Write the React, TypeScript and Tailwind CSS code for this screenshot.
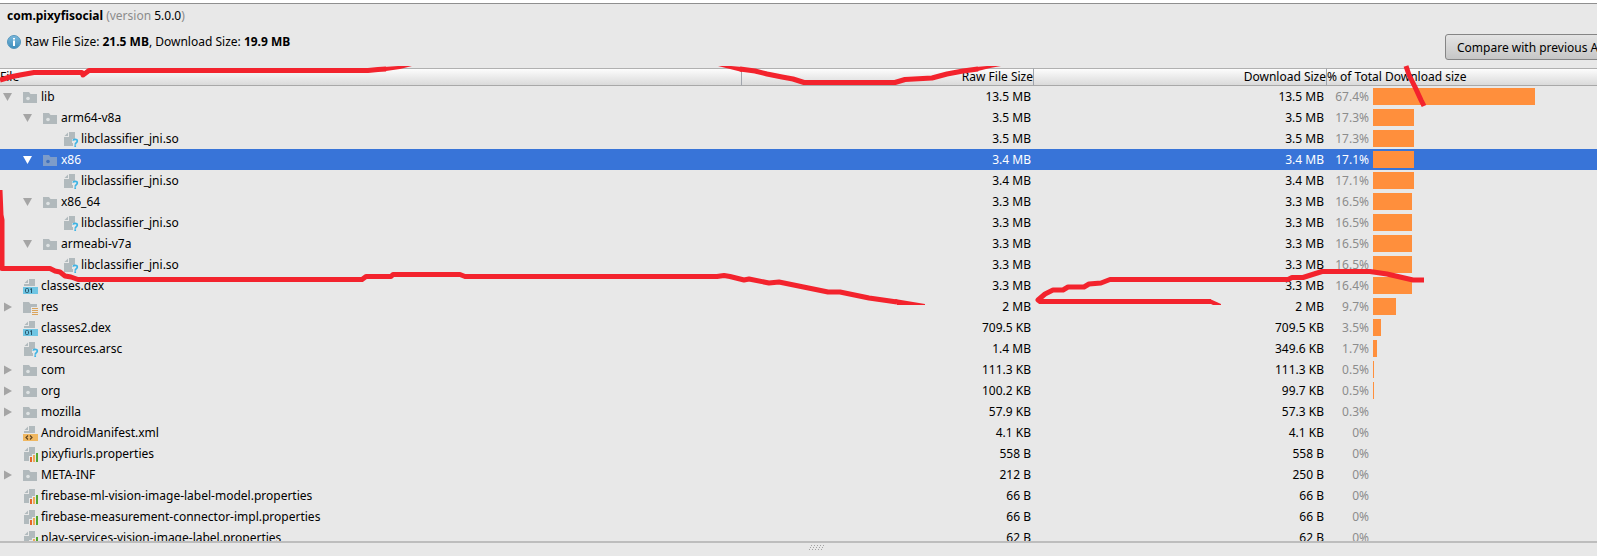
import clsx from 'clsx'

type IconKind = 'folder' | 'res' | 'unknown' | 'dex' | 'xml' | 'props'

type Entry = {
  name: string
  icon: IconKind
  depth: number
  open?: boolean
  raw: string
  download: string
  percent: string
  bar: number
  selected?: boolean
}

const entries: Entry[] = [
  { name: 'lib', icon: 'folder', depth: 0, open: true, raw: '13.5 MB', download: '13.5 MB', percent: '67.4%', bar: 162 },
  { name: 'arm64-v8a', icon: 'folder', depth: 1, open: true, raw: '3.5 MB', download: '3.5 MB', percent: '17.3%', bar: 41 },
  { name: 'libclassifier_jni.so', icon: 'unknown', depth: 2, raw: '3.5 MB', download: '3.5 MB', percent: '17.3%', bar: 41 },
  { name: 'x86', icon: 'folder', depth: 1, open: true, raw: '3.4 MB', download: '3.4 MB', percent: '17.1%', bar: 41, selected: true },
  { name: 'libclassifier_jni.so', icon: 'unknown', depth: 2, raw: '3.4 MB', download: '3.4 MB', percent: '17.1%', bar: 41 },
  { name: 'x86_64', icon: 'folder', depth: 1, open: true, raw: '3.3 MB', download: '3.3 MB', percent: '16.5%', bar: 39 },
  { name: 'libclassifier_jni.so', icon: 'unknown', depth: 2, raw: '3.3 MB', download: '3.3 MB', percent: '16.5%', bar: 39 },
  { name: 'armeabi-v7a', icon: 'folder', depth: 1, open: true, raw: '3.3 MB', download: '3.3 MB', percent: '16.5%', bar: 39 },
  { name: 'libclassifier_jni.so', icon: 'unknown', depth: 2, raw: '3.3 MB', download: '3.3 MB', percent: '16.5%', bar: 39 },
  { name: 'classes.dex', icon: 'dex', depth: 0, raw: '3.3 MB', download: '3.3 MB', percent: '16.4%', bar: 39 },
  { name: 'res', icon: 'res', depth: 0, open: false, raw: '2 MB', download: '2 MB', percent: '9.7%', bar: 23 },
  { name: 'classes2.dex', icon: 'dex', depth: 0, raw: '709.5 KB', download: '709.5 KB', percent: '3.5%', bar: 8 },
  { name: 'resources.arsc', icon: 'unknown', depth: 0, raw: '1.4 MB', download: '349.6 KB', percent: '1.7%', bar: 4 },
  { name: 'com', icon: 'folder', depth: 0, open: false, raw: '111.3 KB', download: '111.3 KB', percent: '0.5%', bar: 1 },
  { name: 'org', icon: 'folder', depth: 0, open: false, raw: '100.2 KB', download: '99.7 KB', percent: '0.5%', bar: 1 },
  { name: 'mozilla', icon: 'folder', depth: 0, open: false, raw: '57.9 KB', download: '57.3 KB', percent: '0.3%', bar: 0 },
  { name: 'AndroidManifest.xml', icon: 'xml', depth: 0, raw: '4.1 KB', download: '4.1 KB', percent: '0%', bar: 0 },
  { name: 'pixyfiurls.properties', icon: 'props', depth: 0, raw: '558 B', download: '558 B', percent: '0%', bar: 0 },
  { name: 'META-INF', icon: 'folder', depth: 0, open: false, raw: '212 B', download: '250 B', percent: '0%', bar: 0 },
  { name: 'firebase-ml-vision-image-label-model.properties', icon: 'props', depth: 0, raw: '66 B', download: '66 B', percent: '0%', bar: 0 },
  { name: 'firebase-measurement-connector-impl.properties', icon: 'props', depth: 0, raw: '66 B', download: '66 B', percent: '0%', bar: 0 },
  { name: 'play-services-vision-image-label.properties', icon: 'props', depth: 0, raw: '62 B', download: '62 B', percent: '0%', bar: 0 },
]

const indents = ['pl-1', 'pl-6', 'pl-[44px]']

function Page() {
  return (
    <>
      <path d="M1.500 5 5 1.500V5Z" fill="#b1babd" />
      <path d="M6 1h6v14H1V6h5Z" fill="#b1babd" />
    </>
  )
}

function FileIcon({ kind, selected }: { kind: IconKind; selected?: boolean }) {
  return (
    <svg viewBox="0 0 16 16" className="h-4 w-4 shrink-0" aria-hidden="true">
      {kind === 'folder' && (
        <>
          <path d="M0 3h6l1.500 2H14v9H0Z" fill={selected ? '#7d9cc9' : '#b1b9bc'} />
          <circle cx="5" cy="9.500" r="1.800" fill={selected ? '#3f70bd' : '#dfe3e4'} />
        </>
      )}
      {kind === 'res' && (
        <>
          <path d="M0 3h6l1.500 2H14v3H8v6H0Z" fill="#b1b9bc" />
          <path d="M9 9.500h6M9 11.500h6M9 13.500h6M9 15.500h6" stroke="#dba45c" />
        </>
      )}
      {kind === 'unknown' && (
        <>
          <Page />
          <path d="M9 8h6v4l-2 4h-3v-4H9Z" fill="#e8e8e8" />
          <path d="M10 9.600C10.300 7.900 14.400 7.800 14.300 10c0 1.600-2.100 1.700-2.100 3.700M12.200 14.300V16" stroke="#3fb4e4" strokeWidth="1.700" fill="none" />
        </>
      )}
      {kind === 'dex' && (
        <>
          <path d="M1.500 5 5 1.500V5ZM6 1h6v7H1V6h5Z" fill="#b1babd" />
          <path d="M0 9h15v7H0Z" fill="#6fc5e3" />
          <rect x="2.500" y="10.500" width="3" height="4" rx="1" stroke="#28566b" fill="none" />
          <path d="m7 11.500 1.500-1V15" stroke="#28566b" fill="none" />
        </>
      )}
      {kind === 'xml' && (
        <>
          <path d="M1.500 5 5 1.500V5ZM6 1h6v7H1V6h5Z" fill="#b1babd" />
          <path d="M0 9h15v7H0Z" fill="#f0b760" />
          <path d="m5 10.500-2 2 2 2M7 10.500l2 2-2 2" stroke="#5e4423" strokeWidth="1.200" fill="none" />
        </>
      )}
      {kind === 'props' && (
        <>
          <Page />
          <path d="M6 16v-6h3V8h3V6h4v10Z" fill="#e8e8e8" />
          <path d="M7 11h2v5H7Z" fill="#e4672b" />
          <path d="M10 9h2v7h-2Z" fill="#eda957" />
          <path d="M13 7h2v9h-2Z" fill="#54a832" />
        </>
      )}
    </svg>
  )
}

function Expander({ open, selected }: { open: boolean; selected?: boolean }) {
  return (
    <button type="button" aria-label={open ? 'Collapse' : 'Expand'} aria-expanded={open} className="h-2 w-2 shrink-0">
      <svg viewBox="0 0 8 8" className="h-2 w-2 overflow-visible" fill={selected ? '#ffffff' : '#a5a5a5'} aria-hidden="true">
        <path d={open ? 'M-1 0h9L3.500 8Z' : 'M0-.5v9L8 4Z'} />
      </svg>
    </button>
  )
}

function EntryRow({ entry }: { entry: Entry }) {
  return (
    <tr className={clsx('h-[21px]', entry.selected && 'bg-[#3874d8] text-white')} aria-selected={entry.selected}>
      <td className="p-0">
        <div className={clsx('flex items-center', indents[entry.depth])}>
          <span className="flex w-[19px] shrink-0 items-center">
            {entry.open !== undefined && <Expander open={entry.open} selected={entry.selected} />}
          </span>
          <FileIcon kind={entry.icon} selected={entry.selected} />
          <span className="ml-0.5 whitespace-nowrap">{entry.name}</span>
        </div>
      </td>
      <td className="p-0 pr-[3px] text-right">{entry.raw}</td>
      <td className="p-0 pr-[3px] text-right">{entry.download}</td>
      <td className="p-0">
        <div className="flex items-center gap-1">
          <span className={clsx('w-[42px] text-right', !entry.selected && 'text-[#8c8c8c]')}>{entry.percent}</span>
          <span className="h-[17px] bg-[#ff8f3c]" style={{ width: entry.bar }} />
        </div>
      </td>
    </tr>
  )
}

function InfoIcon() {
  return (
    <svg viewBox="0 0 14 14" className="h-3.5 w-3.5" aria-hidden="true">
      <defs>
        <linearGradient id="info" x1="0" y1="0" x2="0" y2="1">
          <stop offset="0" stopColor="#7db9dc" />
          <stop offset="1" stopColor="#3c8dbb" />
        </linearGradient>
      </defs>
      <circle cx="7" cy="7" r="6.500" fill="url(#info)" stroke="#5597bd" />
      <path d="M6 3h2v1.500H6ZM6 5.500h2V11H6Z" fill="#fff" />
    </svg>
  )
}

// Freehand marker strokes drawn over the window
function Marker() {
  return (
    <svg className="pointer-events-none absolute inset-0 h-full w-full" fill="none" stroke="#f3232d" strokeWidth="5" strokeLinejoin="round" aria-hidden="true">
      <path d="M0 80 10 77 20 75 34 72.500H82L83 75 89 70.500H368L378 69.500 386 69" />
      <path d="M384 67 398 66H412L400 69 386 71Z" fill="#f3232d" stroke="none" />
      <path d="M740 69 755 71 767 74 782 77 793 79 804 82.500H895L905 79.500 932 78 947 74 963 71 978 69" />
      <path d="M718 66H731L742 67V72L730 69ZM976 67 987 66H1001L990 68 978 71Z" fill="#f3232d" stroke="none" />
      <path d="M1406 66 1409 75 1415 87 1421 100 1424 106" />
      <path d="M0 190 1 215 2 220V268.500H50L55 271 60 272 65 276 71 277 78 279.500H362L366 276.500H391L393 274.500H460L465 276.500H717L724 275.500 730 276.500 744 280 749 279 769 283 779 282 828 292 840 292 869 298 897 302" />
      <path d="M895 299 925 304V305H897Z" fill="#f3232d" stroke="none" />
      <path d="M1211 301.500H1040L1038 300 1045 294 1053 290H1063L1068 287H1084L1089 284 1101 283 1110 279.500H1288L1292 277.500H1303L1314 274 1322 271.500H1370L1387 274 1413 280H1424" />
      <path d="M1210 299 1221 304V305H1213L1209 303Z" fill="#f3232d" stroke="none" />
    </svg>
  )
}

export default function App() {
  return (
    <div className="relative flex h-screen flex-col overflow-hidden bg-[#e8e8e8] font-['Noto_Sans',sans-serif] text-[12px] leading-[17px] text-black">
      <header className="flex h-[68px] shrink-0 justify-between border-t-3 border-white">
        <div className="flex grow flex-col gap-[9px] border-t border-[#8f8f8f] pt-[3px] pl-[7px]">
          <h1 className="text-[#8c8c8c]">
            <b className="text-black">com.pixyfisocial</b> (version <span className="text-black">5.0.0</span>)
          </h1>
          <p className="flex items-center gap-1">
            <InfoIcon />
            <span>
              Raw File Size: <b>21.5 MB</b>, Download Size: <b>19.9 MB</b>
            </span>
          </p>
        </div>
        <div className="w-[152px] shrink-0 overflow-hidden border-t border-[#8f8f8f] pt-[30px]">
          <button type="button" className="h-[26px] rounded-[3px] border border-[#858585] bg-linear-to-b from-[#e4e4e4] to-[#c6c6c6] px-[11px] whitespace-nowrap">
            Compare with previous APK...
          </button>
        </div>
      </header>

      <main className="min-h-0 flex-1 overflow-hidden">
        <table className="w-full table-fixed border-separate border-spacing-0">
          <colgroup>
            <col />
            <col className="w-[292px]" />
            <col className="w-[293px]" />
            <col className="w-[270px]" />
          </colgroup>
          <thead>
            <tr className="bg-linear-to-b from-white to-[#d8d8d8] text-left leading-4 *:border-y *:border-t-[#b0b0b0] *:border-b-[#a8a8a8] *:p-0 *:font-normal">
              <th className="border-r border-r-[#a0a5ad]">File</th>
              <th className="border-r border-r-[#a0a5ad] text-right">Raw File Size</th>
              <th className="border-r border-r-[#a0a5ad] text-right">Download Size</th>
              <th>% of Total Download size</th>
            </tr>
          </thead>
          <tbody>
            {entries.map((entry, i) => (
              <EntryRow key={i} entry={entry} />
            ))}
          </tbody>
        </table>
      </main>

      <footer className="flex h-[15px] shrink-0 justify-center border-t-2 border-[#bdbdbd] pt-0.5 pl-9">
        <svg viewBox="0 0 16 5" className="h-[5px] w-4" stroke="#a3a3a3" strokeDasharray="1 2" aria-hidden="true">
          <path d="M2 .5h14M1 2.500h14M0 4.500h14" />
        </svg>
      </footer>

      <Marker />
    </div>
  )
}
